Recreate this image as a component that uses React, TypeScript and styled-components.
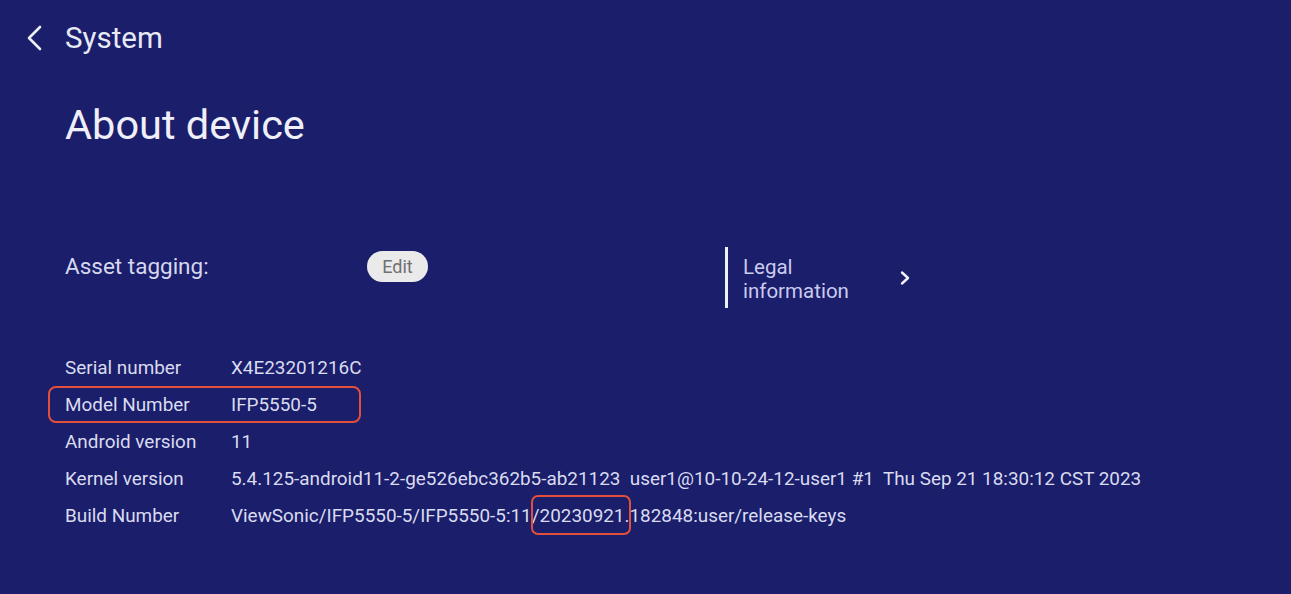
import React from "react";
import styled, { createGlobalStyle } from "styled-components";

const Global = createGlobalStyle`
  html, body { margin: 0; padding: 0; background: #1b1e6a; }
  body { font-family: Roboto, "Noto Sans", sans-serif; -webkit-font-smoothing: antialiased; }
`;

const Page = styled.div`
  width: 1291px;
  height: 594px;
  background: #1b1e6a;
  color: #e6e7f5;
  box-sizing: border-box;
  padding: 20px 0 0 0;
  overflow: hidden;
`;

const TopBar = styled.div`
  display: flex;
  align-items: center;
  height: 36px;
  padding-left: 24px;
  gap: 21px;
`;

const BackIcon = styled.svg`
  width: 20px;
  height: 28px;
  flex: none;
`;

const TopTitle = styled.div`
  font-size: 29.5px;
  color: #e8e9f6;
`;

const Content = styled.div`
  padding-left: 65px;
`;

const Heading = styled.h1`
  margin: 45px 0 0 0;
  font-size: 41.5px;
  font-weight: 400;
  line-height: 48px;
  color: #eeeff8;
`;

const AssetRow = styled.div`
  display: flex;
  align-items: flex-start;
  margin-top: 98px;
`;

const AssetLabel = styled.div`
  width: 302px;
  margin-top: 6px;
  font-size: 22.5px;
  line-height: 26px;
  color: #d6d8ef;
`;

const EditButton = styled.button`
  width: 61px;
  height: 31px;
  margin-top: 4px;
  border-radius: 16px;
  border: none;
  background: #ebeaea;
  color: #707070;
  font-family: Roboto, sans-serif;
  font-size: 18px;
  padding: 0;
`;

const Legal = styled.div`
  display: flex;
  align-items: center;
  margin-left: 297px;
  height: 61px;
  border-left: 3px solid #eef0f8;
  padding-left: 15px;
`;

const LegalText = styled.div`
  width: 155px;
  font-size: 20.5px;
  line-height: 24px;
  color: #c9cbef;
  margin-top: 2px;
`;

const ChevronIcon = styled.svg`
  width: 14px;
  height: 16px;
`;

const InfoList = styled.div`
  margin-top: 41px;
  display: flex;
  flex-direction: column;
`;

const InfoRow = styled.div<{ $boxed?: boolean }>`
  position: relative;
  display: flex;
  align-items: center;
  height: 37px;
  font-size: 18.9px;
  color: #d9dbf0;
  ${(p) =>
    p.$boxed &&
    `
    &::after {
      content: "";
      position: absolute;
      left: -17px;
      top: 0;
      width: 313px;
      height: 37px;
      box-sizing: border-box;
      border: 2.5px solid #e2503c;
      border-radius: 8px;
    }
  `}
`;

const Label = styled.div`
  width: 166px;
  flex: none;
`;

const Value = styled.div`
  white-space: pre;
`;

const Highlight = styled.span`
  position: relative;
  &::after {
    content: "";
    position: absolute;
    left: -1px;
    right: -7px;
    top: -9px;
    bottom: -8px;
    border: 2.5px solid #e2503c;
    border-radius: 7px;
  }
`;

const rows: { label: string; value: React.ReactNode; boxed?: boolean }[] = [
  { label: "Serial number", value: "X4E23201216C" },
  { label: "Model Number", value: "IFP5550-5", boxed: true },
  { label: "Android version", value: "11" },
  {
    label: "Kernel version",
    value:
      "5.4.125-android11-2-ge526ebc362b5-ab21123  user1@10-10-24-12-user1 #1  Thu Sep 21 18:30:12 CST 2023",
  },
  {
    label: "Build Number",
    value: (
      <>
        ViewSonic/IFP5550-5/IFP5550-5:11<Highlight>/20230921</Highlight>.182848:user/release-keys
      </>
    ),
  },
];

export default function App() {
  return (
    <>
      <Global />
      <Page>
        <TopBar>
          <BackIcon viewBox="0 0 20 28">
            <path d="M16 3 L5 14 L16 25" fill="none" stroke="#eceef8" strokeWidth="2.6" strokeLinecap="round" strokeLinejoin="round" />
          </BackIcon>
          <TopTitle>System</TopTitle>
        </TopBar>
        <Content>
          <Heading>About device</Heading>
          <AssetRow>
            <AssetLabel>Asset tagging:</AssetLabel>
            <EditButton>Edit</EditButton>
            <Legal>
              <LegalText>
                Legal
                <br />
                information
              </LegalText>
              <ChevronIcon viewBox="0 0 14 16">
                <path d="M4 2.5 L10 8 L4 13.5" fill="none" stroke="#f2f3fa" strokeWidth="2.4" strokeLinecap="round" strokeLinejoin="round" />
              </ChevronIcon>
            </Legal>
          </AssetRow>
          <InfoList>
            {rows.map((r) => (
              <InfoRow key={r.label} $boxed={r.boxed}>
                <Label>{r.label}</Label>
                <Value>{r.value}</Value>
              </InfoRow>
            ))}
          </InfoList>
        </Content>
      </Page>
    </>
  );
}
